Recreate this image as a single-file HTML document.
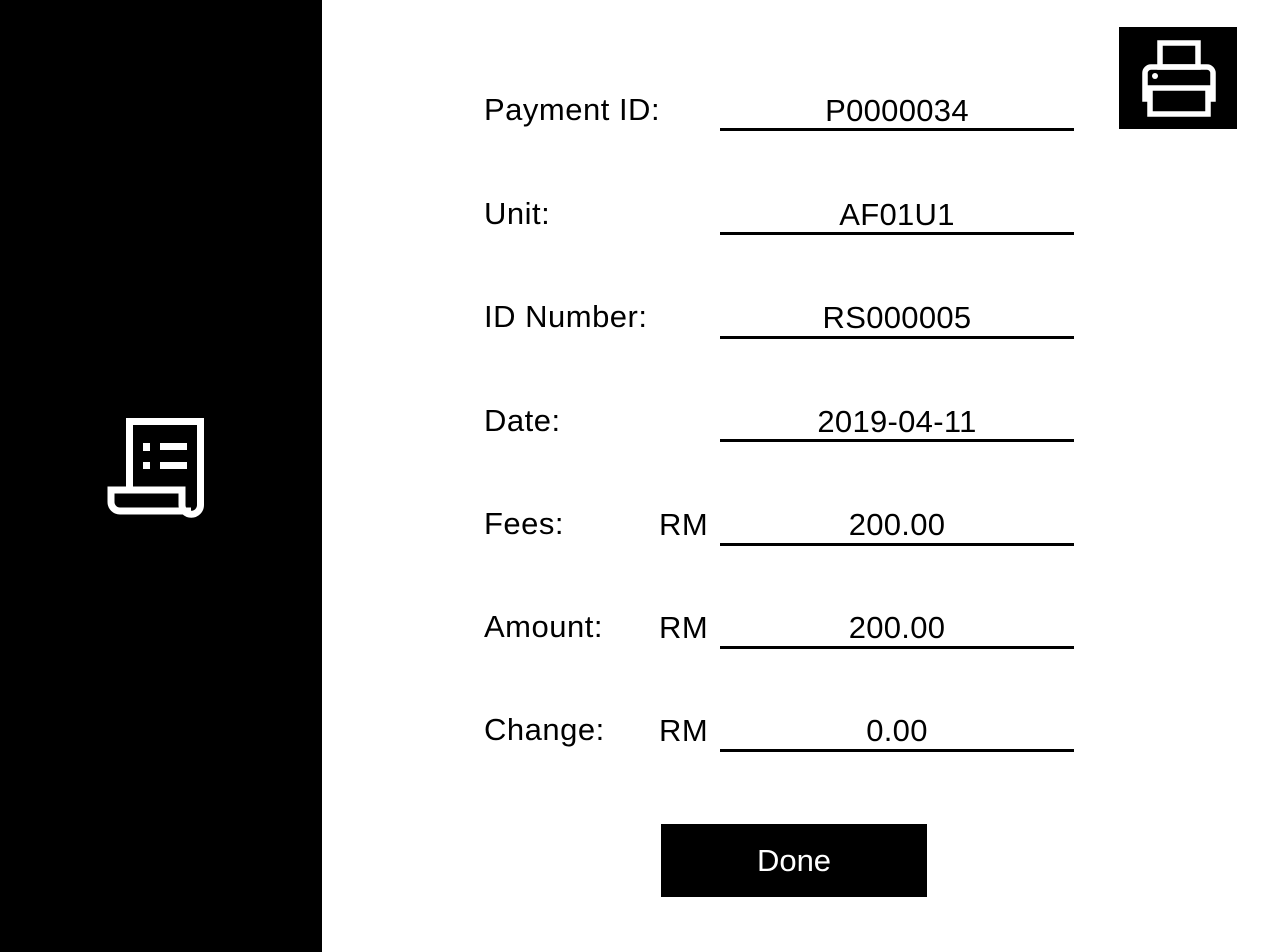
<!DOCTYPE html>
<html><head><style>
body{margin:0;width:1262px;height:952px;background:#fff;position:relative;overflow:hidden;font-family:"Liberation Sans",sans-serif;color:#000}
.side{position:absolute;left:0;top:0;width:322px;height:952px;background:#000}
.t{position:absolute;font-size:31px;line-height:31px;white-space:nowrap;letter-spacing:0.5px}
.v{position:absolute;left:720px;width:354px;text-align:center;font-size:31px;line-height:31px;letter-spacing:0.3px}
.u{position:absolute;left:720px;width:354px;height:3px;background:#000}
.btn{position:absolute;left:661px;top:824px;width:266px;height:73px;background:#000;color:#fff;font-size:31px;line-height:73px;text-align:center}
</style></head><body>
<div class="side"></div>
<svg style="position:absolute;left:100px;top:410px" width="115" height="115" viewBox="0 0 115 115">
<g fill="none" stroke="#fff" stroke-width="7">
<path d="M29.5 78 V11.5 H100.5 V95 A9 9 0 0 1 82 95 V80 H11 V92 A9 9 0 0 0 20 101 H91"/>
</g>
<g fill="#fff">
<rect x="43" y="33" width="7" height="8"/><rect x="43" y="52" width="7" height="7"/>
<rect x="60" y="33" width="27" height="7"/><rect x="60" y="52" width="27" height="7"/>
</g>
</svg>
<div style="position:absolute;left:1119px;top:27px;width:118px;height:102px;background:#000"></div>
<svg style="position:absolute;left:1119px;top:27px" width="118" height="102" viewBox="0 0 118 102">
<g fill="none" stroke="#fff" stroke-width="5.5">
<rect x="41" y="16" width="38" height="24"/>
<path d="M31 72 H26 V46 A6 6 0 0 1 32 40 H88 A6 6 0 0 1 94 46 V72 H89"/>
<rect x="31" y="61" width="58" height="26"/>
</g>
<circle cx="36" cy="49" r="3" fill="#fff"/>
</svg>
<div class="t" style="left:484px;top:94px">Payment ID:</div>
<div class="v" style="top:95px">P0000034</div><div class="u" style="top:128px"></div>
<div class="t" style="left:484px;top:198px">Unit:</div>
<div class="v" style="top:199px">AF01U1</div><div class="u" style="top:232px"></div>
<div class="t" style="left:484px;top:301px">ID Number:</div>
<div class="v" style="top:302px">RS000005</div><div class="u" style="top:336px"></div>
<div class="t" style="left:484px;top:405px">Date:</div>
<div class="v" style="top:406px">2019-04-11</div><div class="u" style="top:439px"></div>
<div class="t" style="left:484px;top:508px">Fees:</div><div class="t" style="left:659px;top:509px">RM</div>
<div class="v" style="top:509px">200.00</div><div class="u" style="top:543px"></div>
<div class="t" style="left:484px;top:611px">Amount:</div><div class="t" style="left:659px;top:612px">RM</div>
<div class="v" style="top:612px">200.00</div><div class="u" style="top:646px"></div>
<div class="t" style="left:484px;top:714px">Change:</div><div class="t" style="left:659px;top:715px">RM</div>
<div class="v" style="top:715px">0.00</div><div class="u" style="top:749px"></div>
<div class="btn">Done</div>
</body></html>
